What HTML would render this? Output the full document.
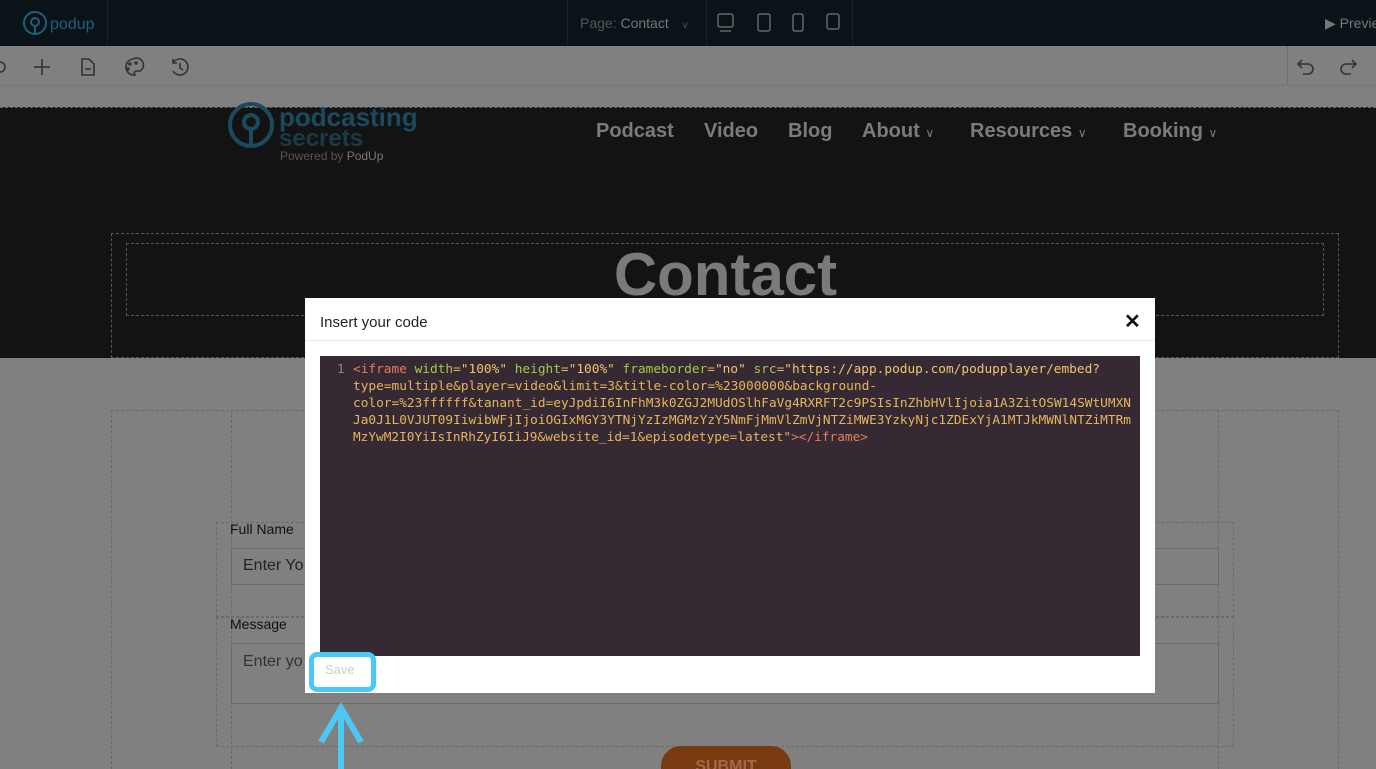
<!DOCTYPE html>
<html><head><meta charset="utf-8"><style>
*{margin:0;padding:0;box-sizing:border-box}
html,body{width:1376px;height:769px;overflow:hidden}
body{background:#808080;font-family:"Liberation Sans",sans-serif;position:relative}
.abs{position:absolute}
.top{left:0;top:0;width:1376px;height:46px;background:#0a1318}
.tb{left:0;top:46px;width:1376px;height:40px;background:#808080;border-bottom:1px solid #777}
.hdr{left:0;top:107px;width:1376px;height:251px;background:#131313;border-top:1px dashed #666}
.nav{top:120px;font-weight:bold;font-size:20px;color:#7b7b7b;white-space:nowrap}
.dash{border:1px dashed #555}
.dash2{border:1px dashed #6a6a6a}
.modal{left:305px;top:298px;width:850px;height:395px;background:#fff}
.code{left:320px;top:356px;width:820px;height:300px;background:#352a33}
.ic{stroke:#333;fill:none;stroke-width:1.6}
</style></head><body>
<div class="abs top"></div>
<div class="abs" style="left:0;top:0;width:108px;height:46px;border-right:1px solid #17222a"></div>
<svg class="abs" style="left:22px;top:10px" width="80" height="28"><circle cx="13" cy="13" r="11" stroke="#1f5f7a" stroke-width="2" fill="none"/><circle cx="13" cy="12" r="4" stroke="#1f5f7a" stroke-width="2" fill="none"/><line x1="13" y1="17" x2="13" y2="24" stroke="#1f5f7a" stroke-width="2"/><text x="28" y="19" font-family="Liberation Sans" font-size="16" fill="#1f5f7a">podup</text></svg>
<div class="abs" style="left:567px;top:0;width:140px;height:46px;border-left:1px solid #17222a;border-right:1px solid #17222a"></div>
<div class="abs" style="left:580px;top:15px;font-size:14px;color:#555;white-space:nowrap">Page: <span style="color:#777">Contact</span> <span style="font-size:10px;margin-left:10px">v</span></div>
<div class="abs" style="left:707px;top:0;width:146px;height:46px;border-right:1px solid #17222a"></div>
<svg class="abs" style="left:715px;top:12px" width="130" height="22"><g stroke="#666" fill="none" stroke-width="1.5"><rect x="3" y="2" width="15" height="13" rx="2"/><line x1="5" y1="19" x2="16" y2="19"/><rect x="43" y="2" width="12" height="17" rx="2"/><rect x="78" y="2" width="10" height="17" rx="2"/><rect x="112" y="2" width="12" height="15" rx="2"/></g></svg>
<div class="abs" style="left:1325px;top:15px;font-size:14px;color:#777;white-space:nowrap">▶ Previe</div>
<div class="abs tb"></div>
<svg class="abs" style="left:0;top:54px" width="200" height="26"><g class="ic"><circle cx="0" cy="13" r="5"/><line x1="42" y1="5" x2="42" y2="21"/><line x1="34" y1="13" x2="50" y2="13"/><path d="M82 5h7l5 5v11h-12z M85 15h6"/><path d="M133 5a8 8 0 1 0 2 16c-2-2 0-4 2-4h3a6 6 0 0 0-7-12z"/><circle cx="130" cy="10" r="1" fill="#333"/><circle cx="136" cy="9" r="1" fill="#333"/><circle cx="128" cy="15" r="1" fill="#333"/><path d="M173 9a8 8 0 1 1 0 8 M173 5v4h4 M180 9v5l3 2"/></g></svg>
<div class="abs" style="left:1287px;top:46px;width:1px;height:40px;background:#6e6e6e"></div>
<svg class="abs" style="left:1295px;top:54px" width="70" height="26"><g class="ic"><path d="M7 6l-4 4 4 4 M3 10h10a5 5 0 0 1 0 10h-5"/><path d="M57 6l4 4-4 4 M61 10h-10a5 5 0 0 0 0 10h5"/></g></svg>
<div class="abs hdr"></div>
<svg class="abs" style="left:226px;top:100px" width="200" height="66"><circle cx="25" cy="25" r="21" stroke="#1b4a5e" stroke-width="4" fill="none"/><circle cx="25" cy="22" r="7" stroke="#1b4a5e" stroke-width="4" fill="none"/><line x1="25" y1="30" x2="25" y2="46" stroke="#1b4a5e" stroke-width="4"/><text x="53" y="26" font-family="Liberation Sans" font-weight="bold" font-size="26" fill="#1b4a5e">podcasting</text><text x="53" y="46" font-family="Liberation Sans" font-weight="bold" font-size="24" fill="#1a3a48">secrets</text><text x="54" y="60" font-family="Liberation Sans" font-size="12" fill="#555">Powered by <tspan fill="#777">PodUp</tspan></text></svg>
<div class="abs nav" style="left:596px">Podcast</div>
<div class="abs nav" style="left:704px">Video</div>
<div class="abs nav" style="left:788px">Blog</div>
<div class="abs nav" style="left:862px">About <span style="font-size:12px;font-weight:normal">∨</span></div>
<div class="abs nav" style="left:970px">Resources <span style="font-size:12px;font-weight:normal">∨</span></div>
<div class="abs nav" style="left:1123px">Booking <span style="font-size:12px;font-weight:normal">∨</span></div>
<div class="abs dash" style="left:111px;top:233px;width:1228px;height:125px"></div>
<div class="abs dash" style="left:126px;top:243px;width:1198px;height:73px"></div>
<div class="abs" style="left:0;top:240px;width:1376px;text-align:center;font-size:60px;font-weight:bold;color:#7a7a7a;padding-left:75px">Contact</div>
<div class="abs dash2" style="left:111px;top:410px;width:1228px;height:359px;border-bottom:none"></div>
<div class="abs dash2" style="left:231px;top:410px;width:988px;height:359px;border-bottom:none"></div>
<div class="abs dash2" style="left:216px;top:522px;width:1018px;height:95px"></div>
<div class="abs dash2" style="left:216px;top:617px;width:1018px;height:130px"></div>
<div class="abs" style="left:230px;top:521px;font-size:14px;color:#111">Full Name</div>
<div class="abs" style="left:231px;top:548px;width:988px;height:37px;border:1px solid #6a6a6a"></div>
<div class="abs" style="left:243px;top:557px;font-size:16px;color:#222">Enter Yo</div>
<div class="abs" style="left:230px;top:616px;font-size:14px;color:#111">Message</div>
<div class="abs" style="left:231px;top:643px;width:988px;height:61px;border:1px solid #6a6a6a"></div>
<div class="abs" style="left:243px;top:653px;font-size:16px;color:#333">Enter yo</div>
<div class="abs" style="left:661px;top:746px;width:130px;height:23px;overflow:hidden;border-radius:20px 20px 0 0;background:#7a3a10;color:#a06a4a;font-weight:bold;font-size:16px;text-align:center;padding-top:12px">SUBMIT</div>
<div class="abs modal"></div>
<div class="abs" style="left:320px;top:314px;font-size:15px;color:#222">Insert your code</div>
<div class="abs" style="left:1124px;top:309px;font-size:20px;font-weight:bold;color:#111">✕</div>
<div class="abs" style="left:305px;top:340px;width:850px;height:1px;background:#e6e6e6"></div>
<div class="abs code"></div>
<svg class="abs" style="left:320px;top:356px" width="820" height="300" font-family="DejaVu Sans Mono, Liberation Mono, monospace" font-size="12.5">
<text x="17" y="17" fill="#888">1</text>
<text x="33" y="17" textLength="747" lengthAdjust="spacingAndGlyphs"><tspan fill="#ec7a5c">&lt;iframe</tspan> <tspan fill="#a9c64a">width</tspan><tspan fill="#e8b45a">=</tspan><tspan fill="#f3c46a">"100%"</tspan> <tspan fill="#a9c64a">height</tspan><tspan fill="#e8b45a">=</tspan><tspan fill="#f3c46a">"100%"</tspan> <tspan fill="#a9c64a">frameborder</tspan><tspan fill="#e8b45a">=</tspan><tspan fill="#f3c46a">"no"</tspan> <tspan fill="#a9c64a">src</tspan><tspan fill="#e8b45a">=</tspan><tspan fill="#f3c46a">"https://app.podup.com/podupplayer/embed?</tspan></text>
<text x="33" y="34" fill="#e8b45a" textLength="524" lengthAdjust="spacingAndGlyphs">type=multiple&amp;player=video&amp;limit=3&amp;title-color=%23000000&amp;background-</text>
<text x="33" y="51" fill="#e8b45a" textLength="778" lengthAdjust="spacingAndGlyphs">color=%23ffffff&amp;tanant_id=eyJpdiI6InFhM3k0ZGJ2MUdOSlhFaVg4RXRFT2c9PSIsInZhbHVlIjoia1A3ZitOSW14SWtUMXN</text>
<text x="33" y="68" fill="#e8b45a" textLength="778" lengthAdjust="spacingAndGlyphs">Ja0J1L0VJUT09IiwibWFjIjoiOGIxMGY3YTNjYzIzMGMzYzY5NmFjMmVlZmVjNTZiMWE3YzkyNjc1ZDExYjA1MTJkMWNlNTZiMTRm</text>
<text x="33" y="85" textLength="515" lengthAdjust="spacingAndGlyphs"><tspan fill="#e8b45a">MzYwM2I0YiIsInRhZyI6IiJ9&amp;website_id=1&amp;episodetype=latest"</tspan><tspan fill="#ec7a5c">&gt;&lt;/iframe&gt;</tspan></text>
</svg>
<div class="abs" style="left:309px;top:652px;width:67px;height:40px;border:5px solid #4cc8f4;border-radius:8px;background:#fff"></div>
<div class="abs" style="left:325px;top:662px;font-size:13px;color:#ccc">Save</div>
<svg class="abs" style="left:315px;top:700px" width="52" height="69"><g stroke="#4cc8f4" stroke-width="6" fill="none"><line x1="26" y1="8" x2="26" y2="69"/><path d="M6 42L26 8L46 42"/></g></svg>
</body></html>
